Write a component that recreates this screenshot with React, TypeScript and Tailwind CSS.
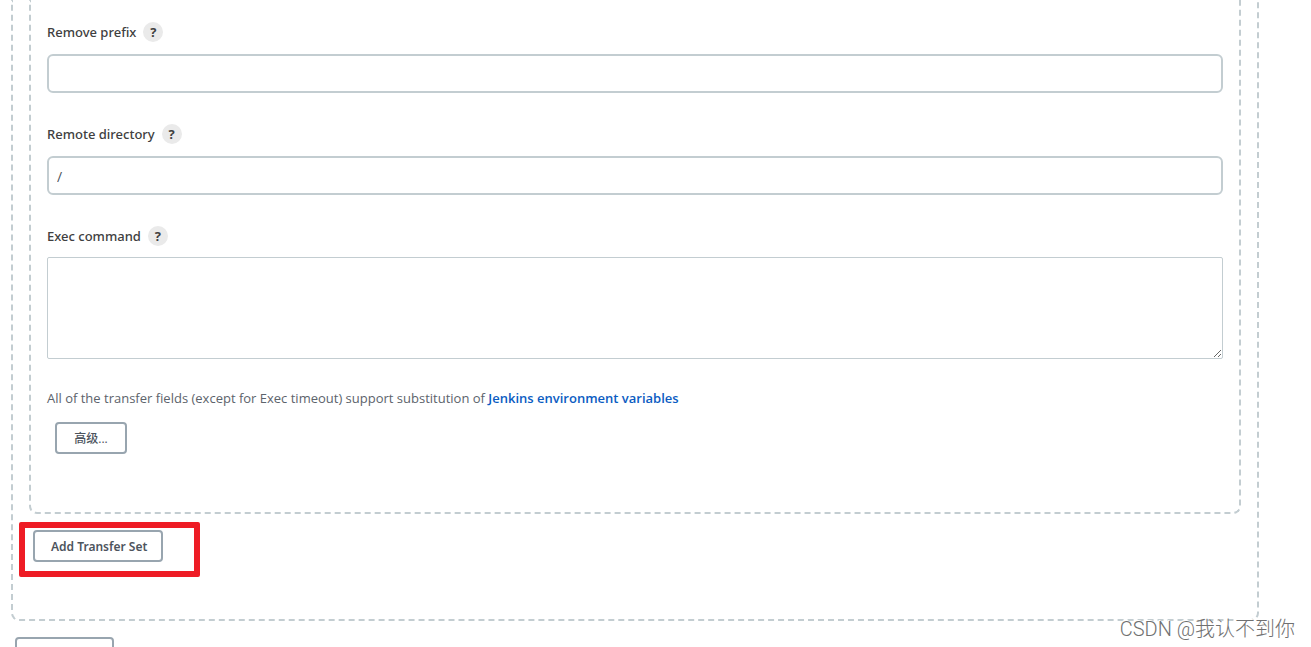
import React, { useState } from 'react';

const HelpButton: React.FC<{ topic: string }> = ({ topic }) => (
  <button
    type="button"
    aria-label={`Help for ${topic}`}
    className="flex h-5 w-5 items-center justify-center rounded-full bg-[#eaeaea] text-[13px] leading-5 font-bold text-[#404040]"
  >
    ?
  </button>
);

const FieldLabel: React.FC<{ id: string; text: string }> = ({ id, text }) => (
  <div className="flex h-5 items-center gap-[7px]">
    <label htmlFor={id} className="font-['Noto_Sans',sans-serif] text-[13px] leading-5 font-medium text-[#404040]">
      {text}
    </label>
    <HelpButton topic={text} />
  </div>
);

const TextField: React.FC<{ id: string; label: string; initial?: string }> = ({ id, label, initial = '' }) => {
  const [value, setValue] = useState(initial);

  return (
    <div className="mb-[31px]">
      <FieldLabel id={id} text={label} />
      <input
        id={id}
        type="text"
        value={value}
        onChange={(e) => setValue(e.target.value)}
        className="mt-3 block h-[39px] w-full rounded-md border-2 border-[#c3cdd1] bg-white px-2 pt-0.5 text-sm text-[#4d545d] outline-none"
      />
    </div>
  );
};

const buttonClass = 'h-8 rounded border-2 border-[#98a5af] bg-white px-4 pt-0.5 text-xs text-[#4d545d]';

const App: React.FC = () => {
  const [command, setCommand] = useState('');

  return (
    <div className="relative h-screen overflow-hidden bg-white pr-[52px] pl-[11px] font-['Open_Sans','Noto_Sans_CJK_SC',sans-serif]">
      <main>
        <section className="rounded-b-lg border-2 border-t-0 border-dashed border-[#c3cdd1] px-4 pb-[57px]">
          <div className="rounded-b-lg border-2 border-t-0 border-dashed border-[#c3cdd1] px-4 pt-[22px] pb-[58px]">
            <TextField id="remove-prefix" label="Remove prefix" />
            <TextField id="remote-directory" label="Remote directory" initial="/" />

            <FieldLabel id="exec-command" text="Exec command" />
            <textarea
              id="exec-command"
              value={command}
              onChange={(e) => setCommand(e.target.value)}
              className="mt-[11px] block h-[102px] w-full resize-y rounded-xs border border-[#c3cdd1] p-2 text-[13px] text-[#4d545d] outline-none"
            />

            <p className="mt-[29px] text-[13px] leading-5 text-[#5c636b]">
              All of the transfer fields (except for Exec timeout) support substitution of{' '}
              <a href="#environment-variables" className="font-semibold text-[#0b5cc2]">
                Jenkins environment variables
              </a>
            </p>
            <button type="button" className={`${buttonClass} mt-[14px] ml-2 block w-[72px] font-medium`}>
              高级...
            </button>
          </div>

          <div className="relative mt-4 ml-1 w-fit">
            <button type="button" className={`${buttonClass} block w-[130px] px-0 font-['Noto_Sans',sans-serif] font-semibold whitespace-nowrap`}>
              Add Transfer Set
            </button>
            <div className="pointer-events-none absolute -top-2 -left-[14px] h-[55px] w-[181px] rounded-xs border-[6px] border-[#ee1c25]" />
          </div>
        </section>

        <button type="button" aria-label="Add Server" className={`${buttonClass} mt-4 ml-1 block w-[99px]`} />
      </main>

      <div className="absolute right-4 bottom-0.5 font-['Roboto','Noto_Sans_CJK_SC',sans-serif] text-xl leading-8 font-light whitespace-nowrap text-[#707070] [text-shadow:-1px_-1px_0_#fff]">
        CSDN @我认不到你
      </div>
    </div>
  );
};

export default App;
